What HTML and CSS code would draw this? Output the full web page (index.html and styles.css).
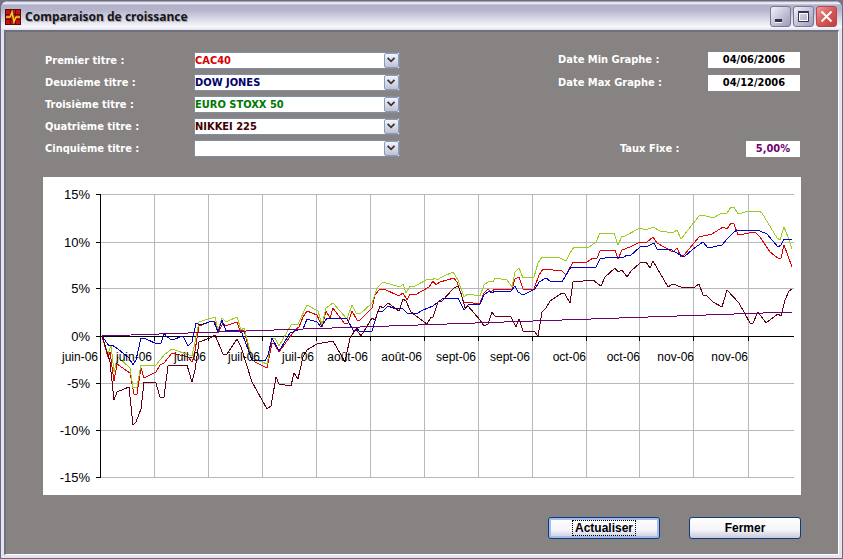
FILE: index.html
```
<!DOCTYPE html>
<html lang="fr">
<head>
  <meta charset="UTF-8">
  <meta name="viewport" content="width=device-width, initial-scale=1.0">
  <title>Comparaison de croissance</title>
  <link rel="stylesheet" href="styles.css">
</head>
<body>
  <div class="window">
    <header class="titlebar">
      <svg class="app-icon" width="16" height="16" viewBox="0 0 16 16">
        <rect width="16" height="16" fill="#5a0a08"/>
        <path d="M1 1h4v4H1zM6 1h4v4H6zM11 1h4v4h-4zM1 6h4v4H1zM6 6h4v4H6zM11 6h4v4h-4zM1 11h4v4H1zM6 11h4v4H6zM11 11h4v4h-4z" fill="#c01410"/>
        <path d="M1 8h4l2-5 2 10 2-5h4" fill="none" stroke="#ffd21c" stroke-width="1.5"/>
      </svg>
      <h1>Comparaison de croissance</h1>
      <div class="window-controls">
        <button type="button" class="control" aria-label="Réduire">
          <svg width="19" height="19" viewBox="0 0 19 19"><path d="M4 12h7v4H4z" fill="#fff"/><path d="M4 12h7v3H4z" fill="#33334f"/></svg>
        </button>
        <button type="button" class="control" aria-label="Agrandir">
          <svg width="19" height="19" viewBox="0 0 19 19"><path d="M4.500 5.500h10v9h-10zM4 4.500h11" fill="none" stroke="#33334f"/><path d="M5.500 6.500h8v7h-8z" fill="none" stroke="#fff"/></svg>
        </button>
        <button type="button" class="control close" aria-label="Fermer la fenêtre">
          <svg width="19" height="19" viewBox="0 0 19 19"><path d="M4.500 4.500l10 10M14.500 4.500l-10 10" fill="none" stroke="#fff" stroke-width="2"/></svg>
        </button>
      </div>
    </header>

    <main class="client">
      <form class="criteria">
        <div class="titles">
          <label for="titre1">Premier titre :</label>
          <div class="combo">
            <select id="titre1" class="red"><option>CAC40</option></select>
            <svg class="arrow" width="15" height="15" viewBox="0 0 15 15"><path d="M3 4.500l4 4 4-4"/></svg>
          </div>
          <label for="titre2">Deuxième titre :</label>
          <div class="combo">
            <select id="titre2" class="navy"><option>DOW JONES</option></select>
            <svg class="arrow" width="15" height="15" viewBox="0 0 15 15"><path d="M3 4.500l4 4 4-4"/></svg>
          </div>
          <label for="titre3">Troisième titre :</label>
          <div class="combo">
            <select id="titre3" class="green"><option>EURO STOXX 50</option></select>
            <svg class="arrow" width="15" height="15" viewBox="0 0 15 15"><path d="M3 4.500l4 4 4-4"/></svg>
          </div>
          <label for="titre4">Quatrième titre :</label>
          <div class="combo">
            <select id="titre4" class="maroon"><option>NIKKEI 225</option></select>
            <svg class="arrow" width="15" height="15" viewBox="0 0 15 15"><path d="M3 4.500l4 4 4-4"/></svg>
          </div>
          <label for="titre5">Cinquième titre :</label>
          <div class="combo">
            <select id="titre5"><option></option></select>
            <svg class="arrow" width="15" height="15" viewBox="0 0 15 15"><path d="M3 4.500l4 4 4-4"/></svg>
          </div>
        </div>

        <div class="params">
          <div class="param">
            <label for="date-min">Date Min Graphe :</label>
            <input type="text" id="date-min" value="04/06/2006">
          </div>
          <div class="param">
            <label for="date-max">Date Max Graphe :</label>
            <input type="text" id="date-max" value="04/12/2006">
          </div>
          <div class="param rate">
            <label for="taux">Taux Fixe :</label>
            <input type="text" id="taux" value="5,00%">
          </div>
        </div>
      </form>

      <svg class="chart" viewBox="43 177 758 318" role="img" aria-label="Croissance comparée">
        <path class="grid" d="M100 194.500H794M100 242.500H794M100 288.500H794M100 383.500H794M100 430.500H794M100 477.500H794
          M154.500 194V478M208.500 194V478M262.500 194V478M316.500 194V478M370.500 194V478M424.500 194V478
          M478.500 194V478M532.500 194V478M586.500 194V478M639.500 194V478M693.500 194V478M748.500 194V478"/>
        <path class="axis" d="M100.500 194V478M96 336.500H794M96 194.500H100M96 242.500H100M96 288.500H100M96 383.500H100M96 430.500H100M96 477.500H100
          M154.500 336V341M208.500 336V341M262.500 336V341M316.500 336V341M370.500 336V341M424.500 336V341
          M478.500 336V341M532.500 336V341M586.500 336V341M639.500 336V341M693.500 336V341M748.500 336V341"/>

        <polyline class="series" stroke="#e00000" points="102,336 108,357 110,352 114,381 117,364 130,373 134,394 137,394 141,368 144,378 156,372 160,365 164,363 172,353 188,357 192,362 194,357 199,326 212,321 215,322 218,333 223,323 225,326 237,322 240,331 244,330 251,358 255,362 267,368 272,343 274,343 279,352 295,330 299,327 303,317 307,311 317,315 322,327 326,311 330,318 333,308 345,324 348,323 352,311 357,320 360,320 372,308 375,295 379,290 384,289 399,296 403,293 407,300 410,294 415,295 429,287 433,281 436,285 440,282 454,278 457,282 464,303 468,302 473,303 480,303 484,293 488,289 491,292 495,289 512,289 515,279 519,277 523,289 534,289 539,275 543,269 562,271 566,275 573,262 587,262 593,258 597,258 600,251 615,250 618,259 622,250 630,247 640,242 647,242 653,237 657,243 673,252 677,248 681,257 684,255 699,237 712,234 723,227 727,229 731,223 734,224 738,235 755,232 760,237 770,252 778,258 781,258 784,245 792,267"/>
        <polyline class="series" stroke="#9acd20" points="102,336 108,354 111,345 114,372 118,357 130,368 133,388 137,387 141,365 156,365 165,354 172,349 192,356 195,342 199,322 215,317 218,330 222,318 226,322 237,317 241,330 244,328 252,358 262,362 267,364 272,338 275,338 279,346 291,325 298,324 307,305 318,311 322,325 326,308 333,303 347,319 352,305 356,313 360,314 372,303 377,288 383,282 400,287 403,284 406,293 410,286 415,286 428,279 432,280 435,278 437,280 442,277 453,272 458,280 464,297 468,294 480,296 484,285 489,281 493,282 495,278 507,280 512,287 515,272 519,268 523,278 534,277 538,263 542,257 560,258 566,261 570,253 574,247 588,248 596,242 600,233 614,233 618,245 622,236 625,236 640,228 646,230 653,227 660,231 673,233 677,230 681,239 699,216 703,215 713,218 722,213 727,213 731,207 734,207 738,214 749,211 759,211 762,213 777,238 780,240 784,227 788,237 792,249"/>
        <polyline class="series" stroke="#0000c8" points="102,336 109,346 112,345 118,349 129,358 133,365 136,360 141,338 146,339 157,344 161,343 164,333 167,337 172,340 183,336 188,346 192,342 196,323 200,325 212,321 214,322 218,332 222,320 226,331 238,330 242,333 252,360 265,361 268,355 272,338 279,351 290,333 298,330 303,329 307,319 317,322 321,327 327,318 347,319 354,332 357,328 360,332 372,331 378,311 383,311 388,306 393,308 403,309 407,313 416,314 423,310 433,306 442,299 458,298 464,310 468,305 480,304 484,295 489,291 492,293 495,291 511,291 515,286 518,292 523,295 535,289 539,282 546,278 550,281 562,282 565,277 571,267 596,267 600,259 610,257 623,258 627,255 630,256 640,247 648,246 654,243 657,249 670,249 675,252 684,257 693,249 703,242 708,248 722,245 727,239 733,233 737,230 760,231 767,234 778,247 781,245 784,239 792,239"/>
        <polyline class="series" stroke="#600010" points="102,336 108,355 110,362 114,400 117,392 129,387 133,425 136,422 141,409 144,382 156,383 160,397 164,397 168,366 187,365 192,382 195,370 199,342 210,338 215,335 223,354 227,354 237,339 241,347 252,382 267,409 271,406 276,377 279,384 291,386 294,373 298,379 303,357 307,350 317,344 333,341 345,362 350,338 356,329 361,336 372,318 375,320 380,306 383,308 388,303 399,311 403,299 406,301 411,312 427,324 431,317 433,317 438,302 442,301 454,288 458,286 461,293 465,308 468,306 480,320 484,326 488,324 492,312 495,316 511,317 516,327 519,319 523,331 534,331 538,336 542,312 546,308 550,301 562,293 565,294 570,303 573,282 593,280 601,286 605,277 615,268 618,272 622,270 627,277 631,271 640,263 646,262 650,268 653,261 668,287 673,284 681,287 695,287 699,284 703,295 707,296 713,302 722,307 727,290 739,303 750,323 753,323 758,312 766,323 778,314 781,316 785,300 789,291 792,289"/>
        <polyline class="series" stroke="#700070" points="102,336 792,312"/>

        <g class="labels percents">
          <text x="90" y="199">15%</text>
          <text x="90" y="247">10%</text>
          <text x="90" y="293">5%</text>
          <text x="90" y="341">0%</text>
          <text x="90" y="388">-5%</text>
          <text x="90" y="435">-10%</text>
          <text x="90" y="482">-15%</text>
        </g>
        <g class="labels">
          <text x="98" y="361">juin-06</text>
          <text x="152" y="361">juin-06</text>
          <text x="206" y="361">juil-06</text>
          <text x="260" y="361">juil-06</text>
          <text x="314" y="361">juil-06</text>
          <text x="368" y="361">août-06</text>
          <text x="422" y="361">août-06</text>
          <text x="476" y="361">sept-06</text>
          <text x="530" y="361">sept-06</text>
          <text x="586" y="361">oct-06</text>
          <text x="640" y="361">oct-06</text>
          <text x="694" y="361">nov-06</text>
          <text x="748" y="361">nov-06</text>
        </g>
      </svg>

      <div class="actions">
        <button type="button" class="action default"><span>Actualiser</span></button>
        <button type="button" class="action"><span>Fermer</span></button>
      </div>
    </main>
  </div>
</body>
</html>
```
FILE: styles.css
```
* {
  box-sizing: border-box;
}
body {
  margin: 0;
  background-color: #777383;
  font-family: "DejaVu Sans Condensed", "Noto Sans", sans-serif;
  font-size: 11px;
  font-weight: bold;
}
.window {
  display: flex;
  flex-direction: column;
  min-height: 100vh;
  padding: 0 3px 3px;
  border: 1px solid #6b6980;
  border-radius: 8px 8px 0 0;
  background-color: #e4e4ee;
}
.titlebar {
  display: flex;
  align-items: center;
  height: 29px;
  margin: 0 -3px;
  padding: 2px 5px 0 4px;
  border-radius: 7px 7px 0 0;
  background: linear-gradient(#8a88a0 0, #ffffff 2px, #b0b0ca 4px, #b4b4cc 9px, #d6d6e4 17px, #f8f8fc 26px, #e0e0e8 29px);
}
.titlebar h1 {
  flex: 1;
  margin: 0 0 0 4px;
  color: #16161c;
  font-family: "Noto Sans", "Open Sans", sans-serif;
  font-size: 12px;
  line-height: 20px;
  text-shadow: 1px 1px 1px #a0a0b0;
}
.window-controls {
  display: flex;
  gap: 2px;
}
.control {
  width: 21px;
  height: 21px;
  padding: 0;
  border: 1px solid #77779a;
  border-radius: 3px;
  background: linear-gradient(135deg, #f4f4fa, #c4c4d8 50%, #9c9cba);
}
.control svg {
  display: block;
}
.close {
  border-color: #b04850;
  background: linear-gradient(135deg, #ee9a9a, #d85858 50%, #c04040);
}
.client {
  flex: 1;
  padding: 20px 37px 13px 37px;
  border: 2px solid #6f6f80;
  border-right: 1px solid #ffffff;
  border-bottom: 1px solid #ffffff;
  background-color: #878382;
}
.criteria {
  display: flex;
  justify-content: space-between;
  padding: 0 1px 0 2px;
}
.titles {
  display: grid;
  grid-template-columns: 149px 206px;
  row-gap: 5px;
  line-height: 17px;
}
label {
  color: #ffffff;
}
.combo {
  position: relative;
  height: 17px;
}
select {
  display: block;
  appearance: none;
  width: 100%;
  height: 17px;
  padding: 0 18px 0 0;
  border: 1px solid #7f8fa8;
  border-radius: 0;
  background-color: #ffffff;
  font: inherit;
  line-height: 15px;
}
.arrow {
  position: absolute;
  top: 1px;
  right: 1px;
  border: 1px solid #8c9cb0;
  border-radius: 2px;
  background: linear-gradient(#f4f4fa, #c0c0d4);
  pointer-events: none;
}
.arrow path {
  fill: none;
  stroke: #33333c;
  stroke-width: 2;
}
.params {
  display: flex;
  flex-direction: column;
  gap: 7px;
  width: 242px;
}
.param {
  display: flex;
  justify-content: space-between;
  line-height: 16px;
}
.param input {
  width: 92px;
  height: 16px;
  padding: 0;
  border: 0;
  background-color: #ffffff;
  color: #000000;
  font: inherit;
  text-align: center;
}
.rate {
  margin: 43px 0 0 62px;
}
.param.rate input {
  width: 54px;
  color: #700070;
}
.red {
  color: #d80000;
}
.navy {
  color: #00006c;
}
.green {
  color: #007800;
}
.maroon {
  color: #400000;
}
.chart {
  display: block;
  width: 100%;
  margin-top: 20px;
  background-color: #ffffff;
}
.grid {
  fill: none;
  stroke: #b8b8b8;
}
.axis {
  fill: none;
  stroke: #000000;
}
.series {
  fill: none;
  shape-rendering: crispEdges;
}
.labels {
  fill: #000000;
  font-family: "Liberation Sans", Arial, sans-serif;
  font-size: 12px;
  font-weight: normal;
  text-anchor: end;
}
.percents {
  font-size: 13px;
}
.actions {
  display: flex;
  justify-content: flex-end;
  gap: 29px;
  margin-top: 22px;
}
.action {
  width: 112px;
  height: 22px;
  padding: 0;
  border: 1px solid #123c78;
  border-radius: 3px;
  background: linear-gradient(#ffffff, #f4f4fa 60%, #c8c8dc);
  color: #000000;
  font-family: "Liberation Sans", Arial, sans-serif;
  font-size: 12px;
  font-weight: bold;
  line-height: 14px;
}
.action span {
  display: inline-block;
  padding: 0 2px;
}
.default {
  box-shadow: inset 0 0 0 2px #a4bcf0;
}
.default span {
  outline: 1px dotted #000000;
}
```
